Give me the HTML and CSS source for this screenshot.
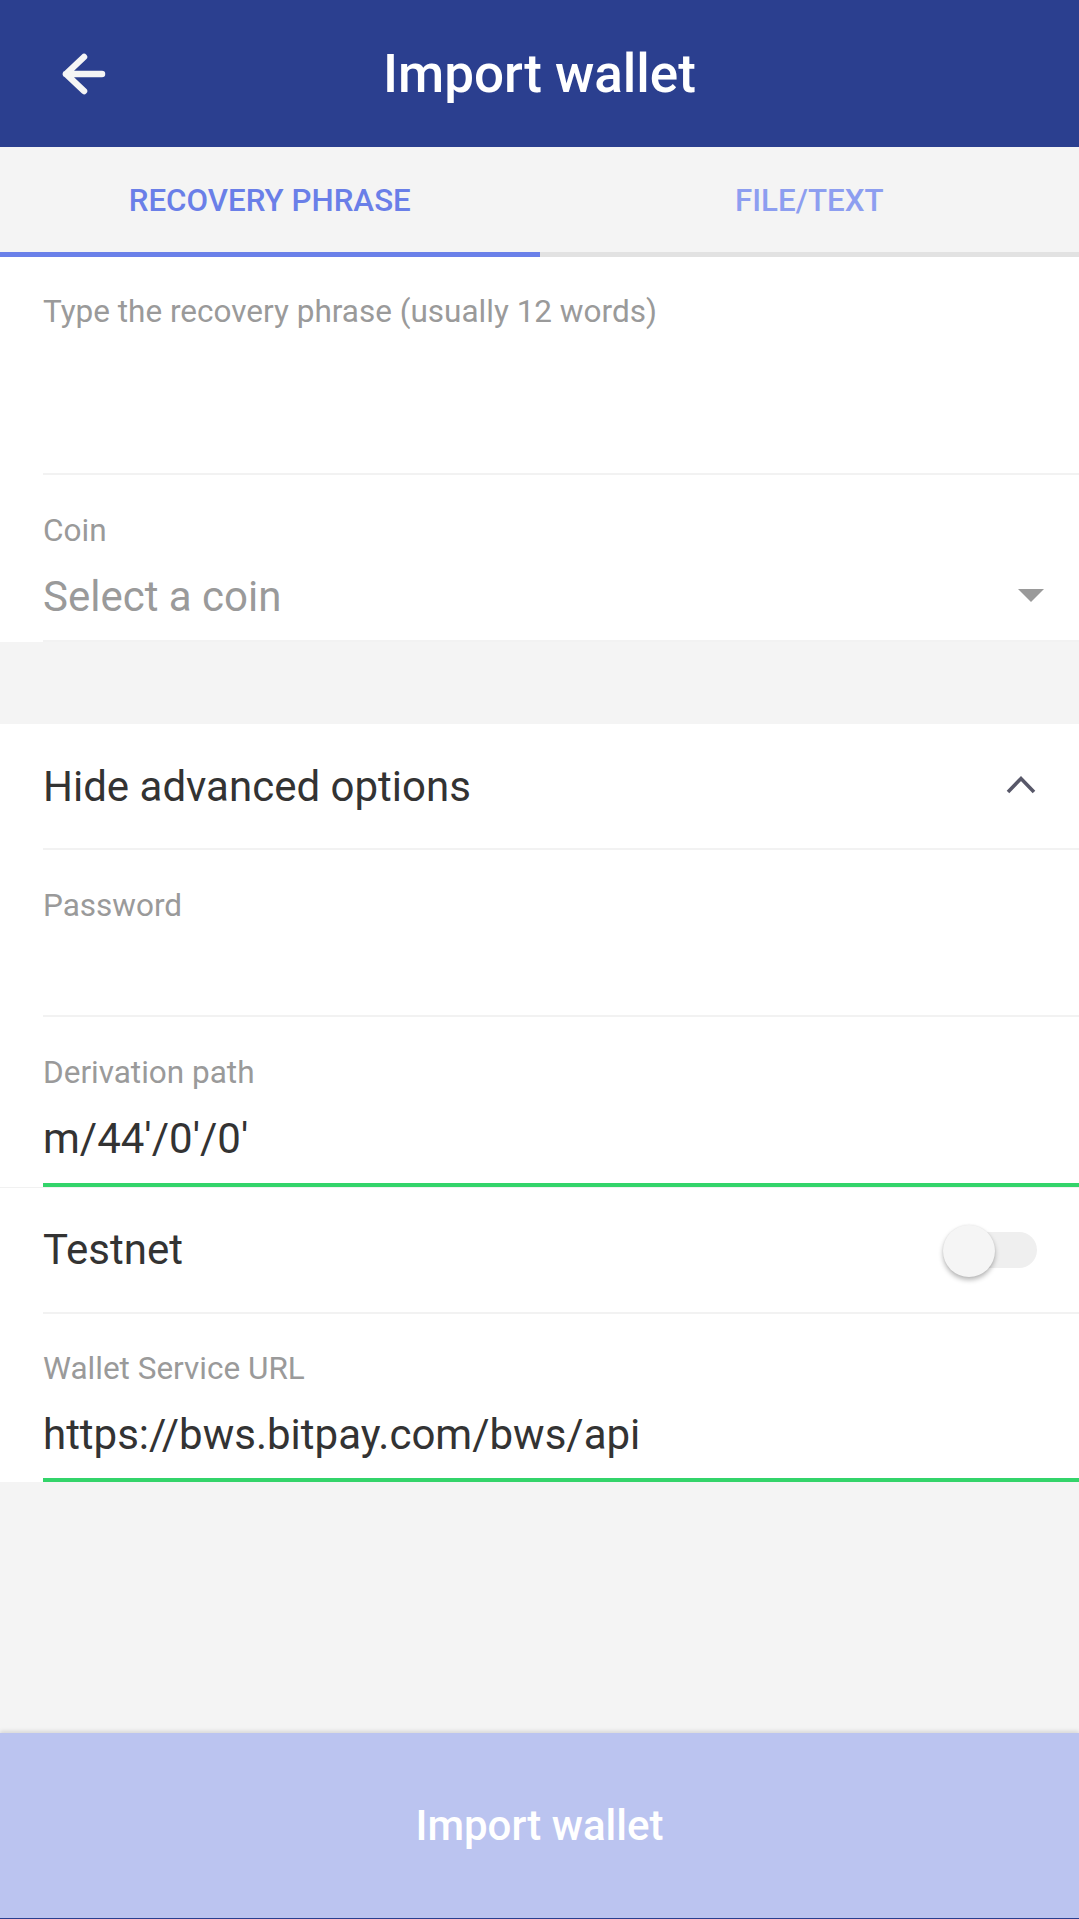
FILE: index.html
```html
<!DOCTYPE html>
<html lang="en">
<head>
<meta charset="utf-8">
<title>Import wallet</title>
<link rel="stylesheet" href="styles.css">
</head>
<body>
<div class="app">
  <header class="topbar">
    <div class="back">
      <svg width="52" height="52" viewBox="0 0 52 52" fill="none" stroke="#f5f5f5" stroke-width="6.5" stroke-linecap="round" stroke-linejoin="round">
        <path d="M44 26H8M26 9L8 26L26 43"/>
      </svg>
    </div>
    <h1 class="title">Import wallet</h1>
    <div></div>
  </header>

  <nav class="tabs">
    <div class="tab tab-active">RECOVERY PHRASE</div>
    <div class="tab">FILE/TEXT</div>
  </nav>

  <section class="card">
    <div class="field field-phrase">
      <div class="label">Type the recovery phrase (usually 12 words)</div>
      <div class="textarea"></div>
    </div>
    <div class="field">
      <div class="label">Coin</div>
      <div class="value select">
        <span class="placeholder">Select a coin</span>
        <svg class="caret" width="26" height="13" viewBox="0 0 26 13"><polygon points="0,0 26,0 13,13" fill="#9a9a9a"/></svg>
      </div>
    </div>
  </section>

  <section class="card card-advanced">
    <div class="row row-adv">
      <span class="row-text">Hide advanced options</span>
      <svg width="34" height="22" viewBox="0 0 34 22" fill="none" stroke="#585869" stroke-width="3.6">
        <path d="M4 18L17 4.5L30 18"/>
      </svg>
    </div>
    <div class="field">
      <div class="label">Password</div>
      <div class="value"></div>
    </div>
    <div class="field field-valid">
      <div class="label">Derivation path</div>
      <div class="value">m/44'/0'/0'</div>
    </div>
    <div class="row-wrap">
      <div class="row row-testnet">
        <span class="row-text">Testnet</span>
        <div class="switch"><span class="knob"></span></div>
      </div>
    </div>
    <div class="field field-valid field-url">
      <div class="label">Wallet Service URL</div>
      <div class="value">https://bws.bitpay.com/bws/api</div>
    </div>
  </section>

  <div class="fill"></div>

  <footer class="cta">Import wallet</footer>
</div>
</body>
</html>
```

FILE: styles.css
```css
* { box-sizing: border-box; }
html, body { margin: 0; padding: 0; }
body {
  font-family: Roboto, "Noto Sans", "Liberation Sans", sans-serif;
  background: #f4f4f4;
  width: 1079px;
}
.app {
  display: flex;
  flex-direction: column;
  min-height: 1919px;
  background: #f4f4f4;
}
.topbar {
  height: 147px;
  background: #2b3f8f;
  display: grid;
  grid-template-columns: 1fr auto 1fr;
  align-items: center;
}
.back {
  padding-left: 58px;
  display: flex;
  align-items: center;
}
.back svg { display: block; }
.title {
  margin: 0;
  color: #ffffff;
  font-size: 53px;
  font-weight: 500;
  line-height: 60px;
}
.tabs {
  display: flex;
  height: 110px;
  background: #f4f4f4;
}
.tab {
  flex: 1;
  display: flex;
  align-items: center;
  justify-content: center;
  font-size: 31.3px;
  font-weight: 500;
  color: #8d9ef0;
  border-bottom: 5px solid #e2e2e2;
  padding-top: 2px;
}
.tab-active {
  color: #6a7fe8;
  border-bottom-color: #6a80e9;
}
.card {
  background: #ffffff;
}
.card-advanced {
  margin-top: 82px;
}
.field {
  margin-left: 43px;
  padding-top: 38px;
  padding-bottom: 18px;
  border-bottom: 2px solid #f2f2f2;
}
.field-phrase {
  padding-top: 37px;
  padding-bottom: 0;
}
.label {
  font-size: 31.5px;
  line-height: 36px;
  color: #9a9a9a;
}
.textarea {
  height: 143px;
}
.value {
  margin-top: 23px;
  height: 50px;
  font-size: 42px;
  line-height: 50px;
  color: #333333;
  white-space: nowrap;
}
.select {
  display: flex;
  align-items: center;
  justify-content: space-between;
  padding-right: 35px;
}
.placeholder { color: #9a9a9a; }
.caret { display: block; margin-top: -3px; }
.field-valid {
  padding-bottom: 19px;
  border-bottom: 4px solid #33d46a;
}
.field-url {
  padding-top: 37px;
  padding-bottom: 18px;
}
.row {
  margin-left: 43px;
  display: flex;
  align-items: center;
  justify-content: space-between;
  border-bottom: 2px solid #f2f2f2;
}
.row-text {
  font-size: 42px;
  line-height: 50px;
  color: #333333;
}
.row-adv {
  padding: 38px 41px 36px 0;
}
.row-adv svg { display: block; margin-top: -4px; }
.row-wrap {
  border-top: 1px solid #f1f1f1;
}
.row-testnet {
  padding: 37px 42px 37px 0;
}
.switch {
  position: relative;
  width: 76px;
  height: 36px;
  border-radius: 18px;
  background: #efefef;
}
.knob {
  position: absolute;
  left: -18px;
  top: -7px;
  width: 52px;
  height: 52px;
  border-radius: 50%;
  background: #f5f5f5;
  box-shadow: 0 3px 5px rgba(0, 0, 0, 0.28), 0 0 2px rgba(0, 0, 0, 0.08);
}
.fill {
  flex: 1;
}
.cta {
  height: 186px;
  background: #bbc4f0;
  color: #ffffff;
  font-size: 42px;
  font-weight: 500;
  display: flex;
  align-items: center;
  justify-content: center;
  box-shadow: 0 -2px 4px rgba(0, 0, 0, 0.12);
  border-bottom: 1px solid #2b3f8f;
}
```
